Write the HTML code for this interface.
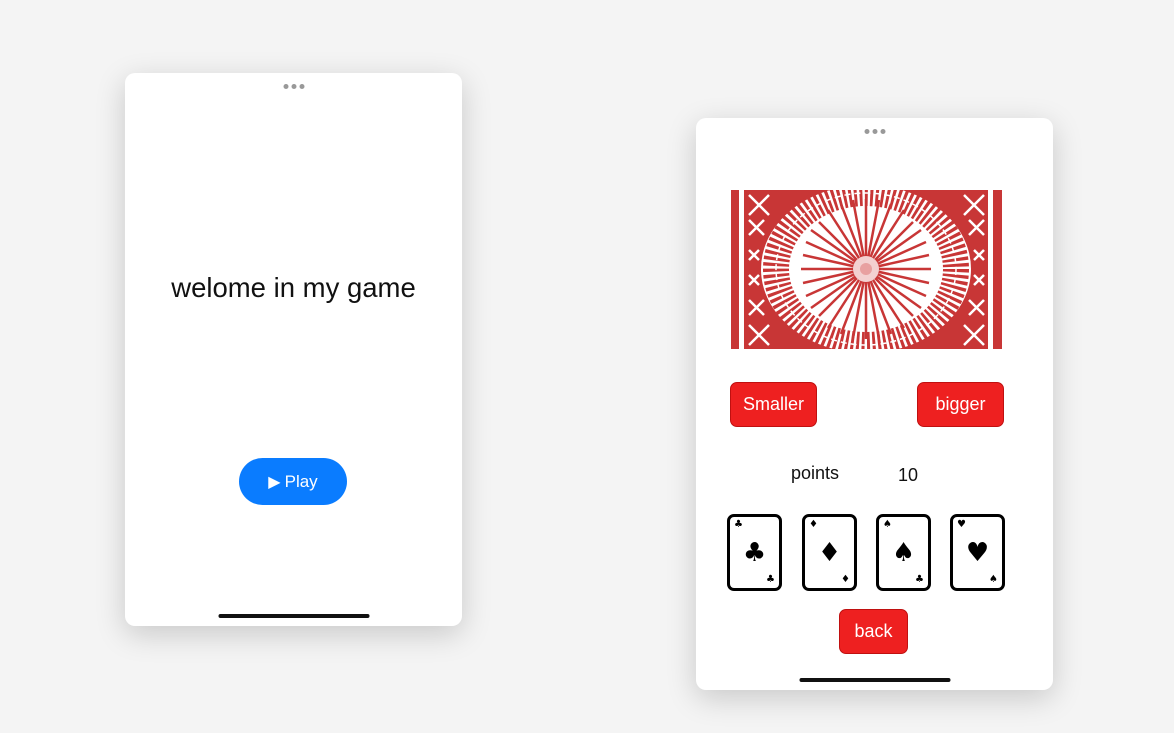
<html><head><style>
body{margin:0;width:1174px;height:733px;background:#f4f4f4;font-family:"Liberation Sans",sans-serif;position:relative;overflow:hidden}
.ph{position:absolute;background:#fff;border-radius:10px;box-shadow:0 8px 30px rgba(0,0,0,.18)}
.dots{position:absolute;top:11px;left:50%;transform:translateX(-50%);display:flex;gap:3px}
.dots i{width:5px;height:5px;border-radius:50%;background:#999;display:block}
.bar{position:absolute;bottom:8px;left:50%;transform:translateX(-50%);width:151px;height:4px;border-radius:2px;background:#111}
.btn{position:absolute;background:#ee2020;border:1px solid #c01010;border-radius:7px;color:#fff;font-size:18px;display:flex;align-items:center;justify-content:center;box-sizing:border-box}
.card{position:absolute;top:514px;width:55px;height:77px;box-sizing:border-box;border:3px solid #000;border-radius:7px;background:#fff;font-family:"DejaVu Sans",sans-serif}
.card .s{position:absolute;font-size:10px;line-height:10px}
.card .c{position:absolute;left:0;right:0;top:22px;text-align:center;font-size:26px;line-height:28px}
</style></head><body>
<div class="ph" style="left:125px;top:73px;width:337px;height:553px">
<div class="dots"><i></i><i></i><i></i></div>
<div style="position:absolute;top:199px;width:100%;text-align:center;font-size:27.5px;color:#111">welome in my game</div>
<div style="position:absolute;left:114px;top:385px;width:108px;height:47px;border-radius:24px;background:#0a7cff;color:#fff;font-size:17px;display:flex;align-items:center;justify-content:center"><span style="font-size:16px;margin-right:4px">▶</span>Play</div>
<div class="bar"></div>
</div>
<div class="ph" style="left:696px;top:118px;width:357px;height:572px">
<div class="dots"><i></i><i></i><i></i></div>
<svg style="position:absolute;left:35px;top:72px" width="271" height="159" viewBox="0 0 271 159">
<rect width="271" height="159" fill="#c83636"/>
<rect x="8" width="5" height="159" fill="#fff"/><rect x="257" width="5" height="159" fill="#fff"/>
<g stroke="#fff" stroke-width="2.5">
<path d="M18 5l20 20M38 5l-20 20M18 30l15 15M33 30l-15 15M18 60l10 10M28 60l-10 10M18 85l10 10M28 85l-10 10M18 110l15 15M33 110l-15 15M18 135l20 20M38 135l-20 20"/>
<path d="M233 5l20 20M253 5l-20 20M238 30l15 15M253 30l-15 15M243 60l10 10M253 60l-10 10M243 85l10 10M253 85l-10 10M238 110l15 15M253 110l-15 15M233 135l20 20M253 135l-20 20"/>
</g>
<ellipse cx="135" cy="79" rx="105" ry="84" fill="#fff"/>
<ellipse cx="135" cy="79" rx="90" ry="76" fill="none" stroke="#c83636" stroke-width="26" stroke-dasharray="3 2.5"/>
<ellipse cx="135" cy="79" rx="90" ry="76" fill="none" stroke="#fff" stroke-width="1.5" stroke-dasharray="6 4"/>
<g stroke="#c83636" stroke-width="2.5">
<path d="M135 79L135 9M135 79L135 149M135 79L70 79M135 79L200 79M135 79L88 32M135 79L182 126M135 79L182 32M135 79L88 126M135 79L110 14M135 79L160 144M135 79L160 14M135 79L110 144M135 79L75 52M135 79L195 106M135 79L195 52M135 79L75 106M135 79L97 20M135 79L173 138M135 79L173 20M135 79L97 138M135 79L122 10M135 79L148 148M135 79L148 10M135 79L122 148M135 79L72 65M135 79L198 93M135 79L198 65M135 79L72 93M135 79L80 40M135 79L190 118M135 79L190 40M135 79L80 118"/>
</g>
<circle cx="135" cy="79" r="13" fill="#f3d0d0"/><circle cx="135" cy="79" r="6" fill="#e8a0a0"/>
</svg>
<div class="btn" style="left:34px;top:264px;width:87px;height:45px">Smaller</div>
<div class="btn" style="left:221px;top:264px;width:87px;height:45px">bigger</div>
<div style="position:absolute;left:95px;top:345px;font-size:18px;color:#111">points</div>
<div style="position:absolute;left:202px;top:347px;font-size:18px;color:#111">10</div>
<div class="btn" style="left:143px;top:491px;width:69px;height:45px">back</div>
<div class="bar"></div>
</div>
<div class="card" style="left:727px"><span class="s" style="left:4px;top:3px">♣</span><div class="c">♣</div><span class="s" style="right:4px;bottom:3px">♣</span></div>
<div class="card" style="left:802px"><span class="s" style="left:4px;top:3px">♦</span><div class="c">♦</div><span class="s" style="right:4px;bottom:3px">♦</span></div>
<div class="card" style="left:876px"><span class="s" style="left:4px;top:3px">♠</span><div class="c">♠</div><span class="s" style="right:4px;bottom:3px">♣</span></div>
<div class="card" style="left:950px"><span class="s" style="left:4px;top:3px">♥</span><div class="c">♥</div><span class="s" style="right:4px;bottom:3px">♠</span></div>
</body></html>
